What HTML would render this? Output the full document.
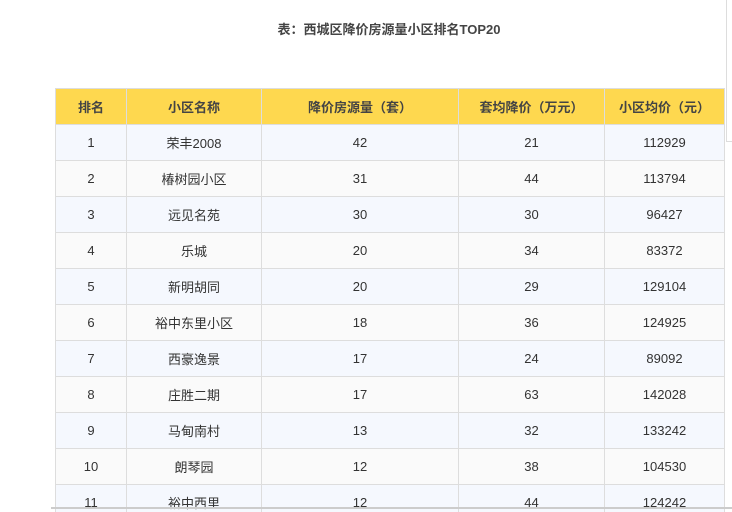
<!DOCTYPE html>
<html><head><meta charset="utf-8"><style>
html,body{margin:0;padding:0;background:#fff;width:732px;height:512px;overflow:hidden;position:relative}
body{font-family:"Liberation Sans","Noto Sans CJK SC",sans-serif;color:#333}
.title{position:absolute;left:0;width:778px;top:19px;text-align:center;font-size:13px;font-weight:bold;color:#444}
.fr{position:absolute;left:726px;top:0;width:1px;height:141px;background:#ddd}
.fh{position:absolute;left:726px;top:141px;width:10px;height:1px;background:#ddd}
.bl{position:absolute;left:51px;top:507px;width:690px;height:2px;background:#ccc}
table{position:absolute;left:55px;top:88px;border-collapse:collapse;font-size:13px}
td,th{border:1px solid #ddd;height:35px;padding:0;text-align:center}
th{background:#fed84f;font-weight:bold;color:#444}
tr:nth-child(even) td{background:#f5f8fe}
tr:nth-child(odd) td{background:#fafafa}
</style></head><body>
<div class="title">表：西城区降价房源量小区排名TOP20</div>
<div class="fr"></div><div class="fh"></div>
<table>
<tr><th style="width:70px">排名</th><th style="width:134px">小区名称</th><th style="width:196px">降价房源量（套）</th><th style="width:145px">套均降价（万元）</th><th style="width:119px">小区均价（元）</th></tr>
<tr><td>1</td><td>荣丰2008</td><td>42</td><td>21</td><td>112929</td></tr>
<tr><td>2</td><td>椿树园小区</td><td>31</td><td>44</td><td>113794</td></tr>
<tr><td>3</td><td>远见名苑</td><td>30</td><td>30</td><td>96427</td></tr>
<tr><td>4</td><td>乐城</td><td>20</td><td>34</td><td>83372</td></tr>
<tr><td>5</td><td>新明胡同</td><td>20</td><td>29</td><td>129104</td></tr>
<tr><td>6</td><td>裕中东里小区</td><td>18</td><td>36</td><td>124925</td></tr>
<tr><td>7</td><td>西豪逸景</td><td>17</td><td>24</td><td>89092</td></tr>
<tr><td>8</td><td>庄胜二期</td><td>17</td><td>63</td><td>142028</td></tr>
<tr><td>9</td><td>马甸南村</td><td>13</td><td>32</td><td>133242</td></tr>
<tr><td>10</td><td>朗琴园</td><td>12</td><td>38</td><td>104530</td></tr>
<tr><td>11</td><td>裕中西里</td><td>12</td><td>44</td><td>124242</td></tr>
</table>
<div class="bl"></div>
</body></html>
